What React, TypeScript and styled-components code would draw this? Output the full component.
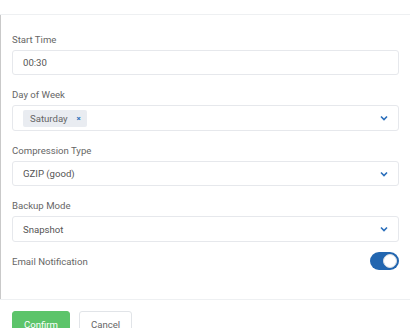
import styled, { createGlobalStyle } from "styled-components";

const GlobalStyle = createGlobalStyle`
  html, body {
    margin: 0;
    padding: 0;
    background: #ffffff;
    font-family: Roboto, "Liberation Sans", sans-serif;
    overflow: hidden;
  }
`;

const Dialog = styled.div`
  width: 410px;
  height: 328px;
  overflow: hidden;
  background: #fff;
`;

const Header = styled.header`
  height: 31px;
  margin-top: -16px;
  display: flex;
  justify-content: space-between;
  align-items: center;
  padding: 0 12px;
  border-bottom: 1px solid #eef0f2;
  box-sizing: border-box;
`;

const Title = styled.h2`
  margin: 0;
  font-size: 13px;
  font-weight: 500;
  color: #444;
  transform: translateY(-7px);
`;

const Close = styled.span`
  font-size: 14px;
  color: #999;
  transform: translateY(-7px);
`;

const Body = styled.div`
  border-left: 1px solid #c9c9c9;
  padding: 18px 11px 29px 11px;
  display: flex;
  flex-direction: column;
  gap: 13px;
`;

const Field = styled.div`
  display: flex;
  flex-direction: column;
  gap: 4px;
`;

const Row = styled.div`
  display: flex;
  justify-content: space-between;
  align-items: center;
  height: 18px;
  margin-top: -3px;
`;

const Label = styled.label`
  font-size: 9.6px;
  line-height: 13px;
  color: #666;
`;

const Box = styled.div<{ $tall?: boolean }>`
  height: ${({ $tall }) => ($tall ? "26px" : "25px")};
  box-sizing: border-box;
  border: 1px solid #e6e8ec;
  border-radius: 3px;
  display: flex;
  align-items: center;
  justify-content: space-between;
  padding: 0 10px 0 10px;
  font-size: 9.6px;
  color: #555;
`;

const Tag = styled.span`
  display: inline-flex;
  align-items: center;
  gap: 9px;
  height: 17px;
  padding: 0 6px 0 7px;
  background: #e9ecf1;
  border-radius: 2px;
  color: #666;
  font-size: 9.6px;
`;

const TagX = styled.span`
  color: #2a6ebb;
  font-size: 8px;
  font-weight: 700;
`;

const Chevron = () => (
  <svg width="8" height="6" viewBox="0 0 8 6">
    <path d="M1 1.5 L4 4.5 L7 1.5" fill="none" stroke="#2a6ebb" strokeWidth="1.6" />
  </svg>
);

const Toggle = styled.div`
  width: 29px;
  height: 18px;
  border-radius: 9px;
  background: #2266b0;
  position: relative;
  &::after {
    content: "";
    position: absolute;
    right: 2px;
    top: 2px;
    width: 12px;
    height: 12px;
    border-radius: 50%;
    background: #fff;
    border: 1px solid #d8dde3;
  }
`;

const Footer = styled.footer`
  border-top: 1px solid #eef0f2;
  padding: 11px 12px;
  display: flex;
  gap: 9px;
`;

const Button = styled.button<{ $primary?: boolean }>`
  height: 26px;
  padding: 0 11px;
  font-family: Roboto, "Liberation Sans", sans-serif;
  font-size: 9.6px;
  border-radius: 3px;
  border: 1px solid ${({ $primary }) => ($primary ? "#5cc46a" : "#e1e4e8")};
  background: ${({ $primary }) => ($primary ? "#5cc46a" : "#fff")};
  color: ${({ $primary }) => ($primary ? "#fff" : "#666")};
  min-width: ${({ $primary }) => ($primary ? "56px" : "51px")};
`;

export default function App() {
  return (
    <>
      <GlobalStyle />
      <Dialog>
        <Header>
          <Title>Add Backup Job</Title>
          <Close>×</Close>
        </Header>
        <Body>
          <Field>
            <Label>Start Time</Label>
            <Box>00:30</Box>
          </Field>
          <Field>
            <Label>Day of Week</Label>
            <Box $tall>
              <Tag>
                Saturday <TagX>×</TagX>
              </Tag>
              <Chevron />
            </Box>
          </Field>
          <Field>
            <Label>Compression Type</Label>
            <Box>
              GZIP (good)
              <Chevron />
            </Box>
          </Field>
          <Field>
            <Label>Backup Mode</Label>
            <Box $tall>
              Snapshot
              <Chevron />
            </Box>
          </Field>
          <Row>
            <Label>Email Notification</Label>
            <Toggle />
          </Row>
        </Body>
        <Footer>
          <Button $primary>Confirm</Button>
          <Button>Cancel</Button>
        </Footer>
      </Dialog>
    </>
  );
}
